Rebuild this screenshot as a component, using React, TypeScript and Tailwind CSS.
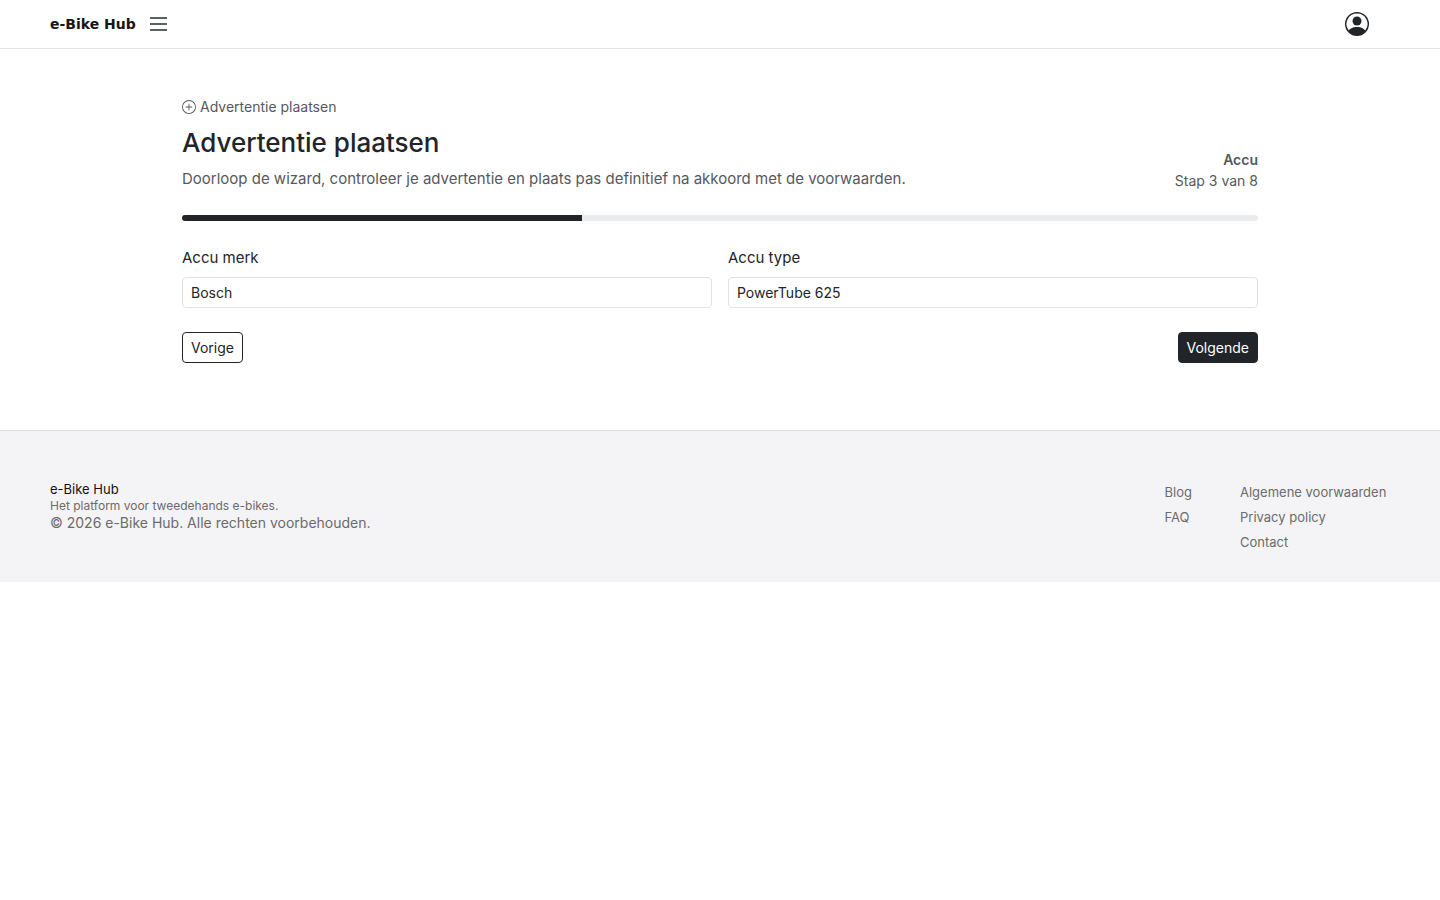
import { useState } from "react";
import { BsPersonCircle, BsPlusCircle } from "react-icons/bs";

const TOTAL_STEPS = 8;
const CURRENT_STEP = 3;
const PROGRESS = 37.2;

const linkColumns = [
  { links: ["Blog", "FAQ"], width: "" },
  { links: ["Algemene voorwaarden", "Privacy policy", "Contact"], width: "min-w-[150px]" },
];

function Header() {
  return (
    <header className="flex h-[49px] items-center justify-between border-b border-[#e2e3e5] pr-[71px] pl-[50px]">
      <div className="flex items-center gap-3.5">
        <a href="#" className="font-['DejaVu_Sans',sans-serif] text-sm font-bold text-[#161616]">
          e-Bike Hub
        </a>
        <button type="button" aria-label="Menu" className="block">
          <svg width="17" height="14" viewBox="0 0 17 14" className="block text-[#5c5f63]" fill="currentColor">
            <path d="M0 0h17v2h-17zM0 6h17v2h-17zM0 12h17v2h-17z" />
          </svg>
        </button>
      </div>
      <button type="button" aria-label="Account" className="text-2xl text-[#212529]">
        <BsPersonCircle />
      </button>
    </header>
  );
}

function Field({ id, label, initial }: { id: string; label: string; initial: string }) {
  const [value, setValue] = useState(initial);
  return (
    <div className="flex flex-col gap-[7px]">
      <label htmlFor={id} className="text-[15px] leading-[25px]">
        {label}
      </label>
      <input
        id={id}
        type="text"
        value={value}
        onChange={(e) => setValue(e.target.value)}
        className="h-[31px] w-full rounded border border-[#dee2e6] bg-white px-2 text-sm outline-none"
      />
    </div>
  );
}

function Footer() {
  return (
    <footer className="flex justify-between border-t border-[#dedfe1] bg-[#f4f4f7] px-[50px] pt-[50px] pb-[29px] text-[#6b6b6b]">
      <div>
        <p className="text-[13px] leading-[17px] text-[#111111]">e-Bike Hub</p>
        <p className="text-xs">Het platform voor tweedehands e-bikes.</p>
        <p className="text-sm leading-[18px]">© 2026 e-Bike Hub. Alle rechten voorbehouden.</p>
      </div>
      <nav className="flex gap-12">
        {linkColumns.map(({ links, width }) => (
          <ul key={links[0]} className={`flex flex-col gap-[3px] text-[13px] leading-[22px] ${width}`}>
            {links.map((link) => (
              <li key={link}>
                <a href="#">{link}</a>
              </li>
            ))}
          </ul>
        ))}
      </nav>
    </footer>
  );
}

export default function App() {
  return (
    <div className="bg-white font-[Inter,sans-serif] text-[#212529]">
      <Header />
      <main className="mx-auto max-w-[1100px] px-3 pt-[47px] pb-[67px]">
        <div className="flex items-end justify-between">
          <div>
            <p className="flex items-center gap-1 text-sm leading-[21px] text-[#55595d]">
              <BsPlusCircle />
              Advertentie plaatsen
            </p>
            <h1 className="mt-2 text-[26px] leading-[35px] font-medium">Advertentie plaatsen</h1>
            <p className="mt-1.5 text-[15px] leading-[25px] text-[#55595d]">
              Doorloop de wizard, controleer je advertentie en plaats pas definitief na akkoord met de voorwaarden.
            </p>
          </div>
          <div className="text-right text-sm leading-[21px] text-[#55595d]">
            <p className="font-semibold">Accu</p>
            <p>
              Stap {CURRENT_STEP} van {TOTAL_STEPS}
            </p>
          </div>
        </div>
        <div
          role="progressbar"
          aria-label="Voortgang"
          aria-valuemin={0}
          aria-valuemax={TOTAL_STEPS}
          aria-valuenow={CURRENT_STEP}
          className="mt-6 h-1.5 overflow-hidden rounded-md bg-[#e9ecef]"
        >
          <div className="h-full bg-[#212529]" style={{ width: `${PROGRESS}%` }} />
        </div>
        <form className="mt-6" onSubmit={(e) => e.preventDefault()}>
          <div className="grid grid-cols-2 gap-4">
            <Field id="accu-merk" label="Accu merk" initial="Bosch" />
            <Field id="accu-type" label="Accu type" initial="PowerTube 625" />
          </div>
          <div className="mt-6 flex justify-between">
            <button type="button" className="h-[31px] rounded border border-[#212529] px-2 text-sm">
              Vorige
            </button>
            <button type="submit" className="h-[31px] rounded border border-[#212529] bg-[#212529] px-2 text-sm text-white">
              Volgende
            </button>
          </div>
        </form>
      </main>
      <Footer />
    </div>
  );
}
